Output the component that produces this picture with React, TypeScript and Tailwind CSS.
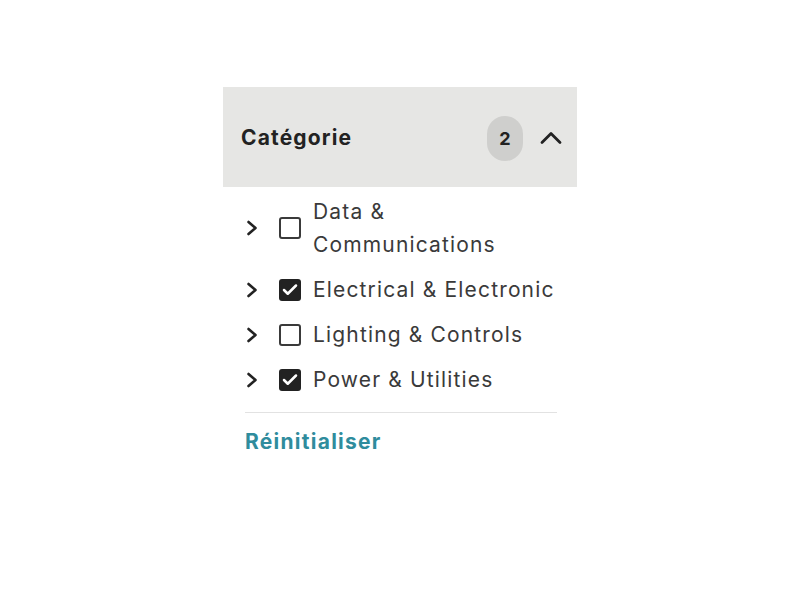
import { Check } from 'lucide-react';

const items = [
  { label: 'Data & Communications', checked: false },
  { label: 'Electrical & Electronic', checked: true },
  { label: 'Lighting & Controls', checked: false },
  { label: 'Power & Utilities', checked: true },
];

export default function App() {
  return (
    <div className="min-h-screen bg-white pt-[87px] font-['Inter',sans-serif]">
      <div className="ml-[223px] w-[354px]">
        <div className="flex h-[100px] items-center bg-[#e6e6e4] pl-[18px] pr-[14px] pt-[2px]">
          <h2 className="flex-1 text-[21px] font-bold tracking-[0.055em] text-[#222]">Catégorie</h2>
          <span className="flex h-[45px] w-[36px] items-center justify-center rounded-full bg-[#cfcfcd] text-[18px] font-bold text-[#222]">
            2
          </span>
          <svg className="ml-[16px]" width="24" height="14" viewBox="0 0 24 14" fill="none">
            <path d="M3 11.5 L12 2.5 L21 11.5" stroke="#222" strokeWidth="2.8" strokeLinecap="round" strokeLinejoin="round" />
          </svg>
        </div>

        <div className="px-[22px] pt-2">
          <ul className="flex flex-col gap-3">
            {items.map((item) => (
              <li key={item.label} className="flex items-center">
                <svg className="shrink-0" width="14" height="18" viewBox="0 0 14 18" fill="none">
                  <path d="M3.5 3 L10.5 9 L3.5 15" stroke="#222" strokeWidth="2.6" strokeLinecap="round" strokeLinejoin="round" />
                </svg>
                <span
                  className={`ml-[20px] flex h-[22px] w-[22px] shrink-0 items-center justify-center rounded-[3px] ${
                    item.checked ? 'bg-[#222]' : 'border-2 border-[#3a3a3a] bg-white'
                  }`}
                >
                  {item.checked && <Check className="h-[18px] w-[18px] text-white" strokeWidth={3.4} />}
                </span>
                <span className="ml-[12px] w-[250px] shrink-0 text-[21px] leading-[33px] tracking-[0.055em] text-[#3a3a3a]">
                  {item.label}
                </span>
              </li>
            ))}
          </ul>
          <div className="mr-[-2px] mt-4 border-t border-[#e2e2e2]" />
          <button className="mt-[16px] text-[21px] font-bold leading-[26px] tracking-[0.06em] text-[#2f8c9d]">
            Réinitialiser
          </button>
        </div>
      </div>
    </div>
  );
}
